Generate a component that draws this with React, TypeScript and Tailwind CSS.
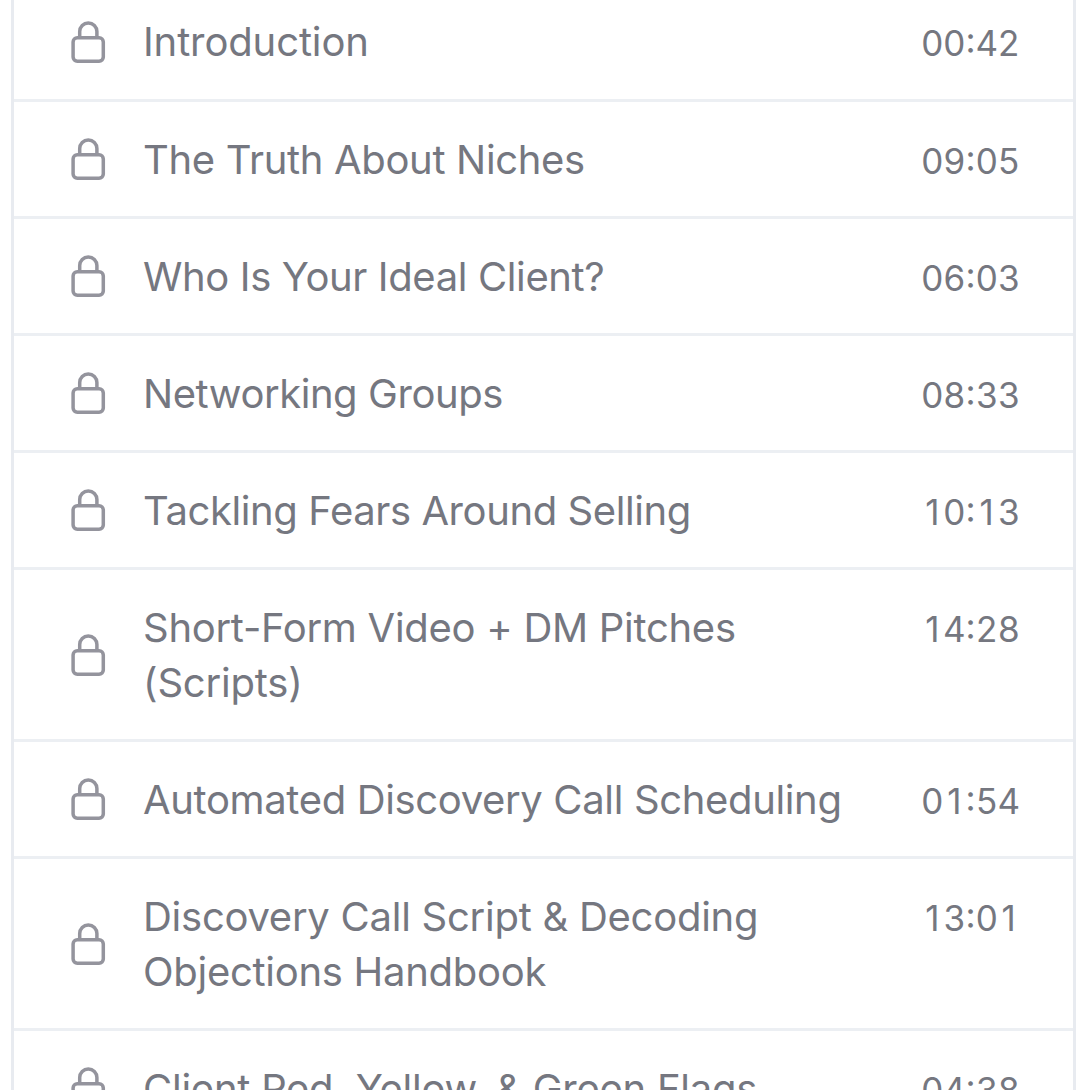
import clsx from "clsx";

interface TitleLine {
  text: string;
  tracking: string;
}

interface Lesson {
  lines: TitleLine[];
  duration: string;
}

const lessons: Lesson[] = [
  { lines: [{ text: "Introduction", tracking: "tracking-[-0.12px]" }], duration: "00:42" },
  { lines: [{ text: "The Truth About Niches", tracking: "tracking-[-0.33px]" }], duration: "09:05" },
  { lines: [{ text: "Who Is Your Ideal Client?", tracking: "tracking-[-0.38px]" }], duration: "06:03" },
  { lines: [{ text: "Networking Groups", tracking: "tracking-[-0.44px]" }], duration: "08:33" },
  { lines: [{ text: "Tackling Fears Around Selling", tracking: "tracking-[-0.41px]" }], duration: "10:13" },
  {
    lines: [
      { text: "Short-Form Video + DM Pitches", tracking: "tracking-[-0.28px]" },
      { text: "(Scripts)", tracking: "tracking-[-0.2px]" },
    ],
    duration: "14:28",
  },
  { lines: [{ text: "Automated Discovery Call Scheduling", tracking: "tracking-[-0.35px]" }], duration: "01:54" },
  {
    lines: [
      { text: "Discovery Call Script & Decoding", tracking: "tracking-[-0.26px]" },
      { text: "Objections Handbook", tracking: "tracking-[-0.28px]" },
    ],
    duration: "13:01",
  },
  { lines: [{ text: "Client Red, Yellow, & Green Flags", tracking: "tracking-[-0.25px]" }], duration: "04:38" },
];

function LockIcon() {
  return (
    <svg
      className="h-[44px] w-[36px] shrink-0 text-[#94949d]"
      viewBox="0 0 36 44"
      fill="none"
      stroke="currentColor"
      strokeWidth="3.5"
    >
      <rect x="3.1" y="17.8" width="30.2" height="23.4" rx="4.2" />
      <path d="M9.7 17.8v-6.3a8.6 8.6 0 0 1 17.2 0v6.3" />
    </svg>
  );
}

// Equal-width digit cells, so the narrow "1" lines up without its tabular serif
function Duration({ value }: { value: string }) {
  return (
    <time className="mt-[2px] -mb-[2px] flex self-start text-[35px] leading-[54.6px] [font-feature-settings:'case']">
      {value.split("").map((char, i) => (
        <span
          key={i}
          className={clsx("flex justify-center", char === ":" ? "w-[10.4px]" : "w-[22px]")}
        >
          {char}
        </span>
      ))}
    </time>
  );
}

function LessonRow({ lesson }: { lesson: Lesson }) {
  return (
    <li className="flex items-center border-b-[3px] border-[#eceff3] pt-[30px] pr-[53.3px] pb-[29.6px] pl-[56px] text-[#757780]">
      <LockIcon />
      <div className="mt-[1px] -mb-[1px] ml-[37px] flex-1 text-[40px] leading-[54.6px] whitespace-nowrap">
        {lesson.lines.map((line) => (
          <span key={line.text} className={clsx("block", line.tracking)}>
            {line.text}
          </span>
        ))}
      </div>
      <Duration value={lesson.duration} />
    </li>
  );
}

export default function App() {
  return (
    <main className="h-[1090px] overflow-hidden bg-white px-[11px] font-['Inter',sans-serif]">
      <ul className="-mt-[15.7px] w-[1065px] border-x-[3px] border-[#e8ebf0]">
        {lessons.map((lesson) => (
          <LessonRow key={lesson.duration} lesson={lesson} />
        ))}
      </ul>
    </main>
  );
}
